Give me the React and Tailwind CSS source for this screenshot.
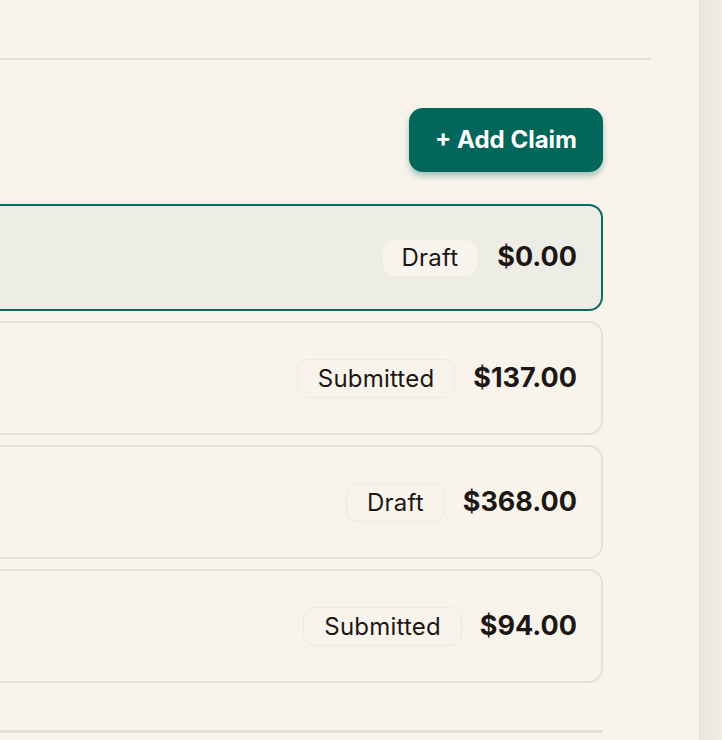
import React from 'react';

const claims = [
  { id: 1, status: 'Draft', amount: '$0.00', selected: true },
  { id: 2, status: 'Submitted', amount: '$137.00' },
  { id: 3, status: 'Draft', amount: '$368.00' },
  { id: 4, status: 'Submitted', amount: '$94.00' },
];

const font = { fontFamily: 'Inter, "Noto Sans", sans-serif' };

const ClaimRow = ({ claim }) => {
  if (claim.selected) {
    return (
      <div className="h-[107px] flex items-center justify-end gap-5 pr-[24px] rounded-[14px] border-2 border-[#0b6b5f] bg-[#edede6]">
        <span className="px-[19px] py-[3px] leading-[30px] text-2xl tracking-[0.2px] text-[#1c1714] bg-[#f8f4ee] rounded-xl">
          {claim.status}
        </span>
        <span className="text-[27px] font-bold text-[#1c1714]">{claim.amount}</span>
      </div>
    );
  }
  return (
    <div className="h-[114px] flex items-center justify-end gap-[18px] pr-[24px] rounded-[14px] border-2 border-[#e6e1d4] bg-[#f8f4ec]">
      <span className="px-5 py-1 leading-[29px] text-2xl tracking-[0.2px] text-[#1c1714] bg-[#f8f4ec] border border-[#efe9de] rounded-xl">
        {claim.status}
      </span>
      <span className="text-[27px] font-bold text-[#1c1714]">{claim.amount}</span>
    </div>
  );
};

export default function App() {
  return (
    <div className="flex w-[722px] h-[740px] overflow-hidden bg-[#f0ece6]" style={font}>
      <main className="w-[700px] shrink-0 bg-[#f8f4ec] border-r border-[#e8e2d8]">
        <div className="h-[60px] mr-[48px] border-b-2 border-[#e5dfd0]" />
        <div className="-ml-[20px] w-[623px]">
          <div className="flex justify-end pt-[48px]">
            <button className="h-[64px] px-[26px] rounded-[14px] bg-[#02665a] text-white text-2xl font-bold shadow-[0_4px_6px_rgba(2,102,90,0.35)]">
              + Add Claim
            </button>
          </div>
          <div className="mt-[32px] flex flex-col gap-[10px]">
            {claims.map((c) => (
              <ClaimRow key={c.id} claim={c} />
            ))}
          </div>
          <div className="mt-[47px] border-t-[3px] border-[#e5e0d8]" />
        </div>
      </main>
      <div className="flex-1 bg-gradient-to-r from-[#ebe6de] to-[#f0ece6]" />
    </div>
  );
}
